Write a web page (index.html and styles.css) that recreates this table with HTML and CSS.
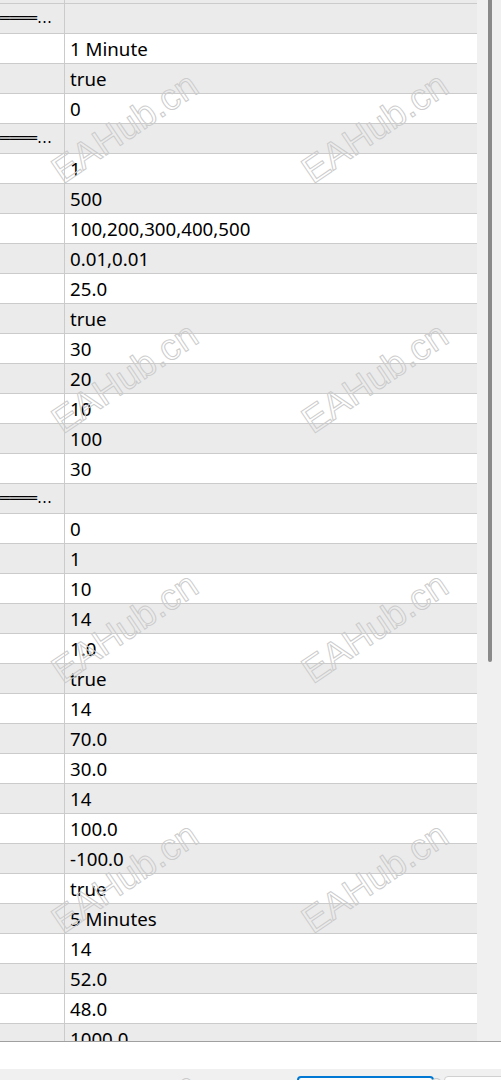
FILE: index.html
```html
<!DOCTYPE html>
<html lang="en">
<head>
    <meta charset="UTF-8">
    <meta name="viewport" content="width=device-width, initial-scale=1.0">
    <title>Inputs</title>
    <link rel="stylesheet" href="styles.css">
</head>
<body>
    <div class="window">
        <div class="panel">
            <div class="grid">
                <div class="rows">
                    <div class="row gray"><div class="name"></div><div class="value"></div></div>
                    <div class="row gray sep"><div class="name"><span>══════════════…</span></div><div class="value"></div></div>
                    <div class="row"><div class="name"></div><div class="value">1 Minute</div></div>
                    <div class="row gray"><div class="name"></div><div class="value">true</div></div>
                    <div class="row"><div class="name"></div><div class="value">0</div></div>
                    <div class="row gray sep"><div class="name"><span>══════════════…</span></div><div class="value"></div></div>
                    <div class="row"><div class="name"></div><div class="value">1</div></div>
                    <div class="row gray"><div class="name"></div><div class="value">500</div></div>
                    <div class="row"><div class="name"></div><div class="value">100,200,300,400,500</div></div>
                    <div class="row gray"><div class="name"></div><div class="value">0.01,0.01</div></div>
                    <div class="row"><div class="name"></div><div class="value">25.0</div></div>
                    <div class="row gray"><div class="name"></div><div class="value">true</div></div>
                    <div class="row"><div class="name"></div><div class="value">30</div></div>
                    <div class="row gray"><div class="name"></div><div class="value">20</div></div>
                    <div class="row"><div class="name"></div><div class="value">10</div></div>
                    <div class="row gray"><div class="name"></div><div class="value">100</div></div>
                    <div class="row"><div class="name"></div><div class="value">30</div></div>
                    <div class="row gray sep"><div class="name"><span>══════════════…</span></div><div class="value"></div></div>
                    <div class="row"><div class="name"></div><div class="value">0</div></div>
                    <div class="row gray"><div class="name"></div><div class="value">1</div></div>
                    <div class="row"><div class="name"></div><div class="value">10</div></div>
                    <div class="row gray"><div class="name"></div><div class="value">14</div></div>
                    <div class="row"><div class="name"></div><div class="value">1.0</div></div>
                    <div class="row gray"><div class="name"></div><div class="value">true</div></div>
                    <div class="row"><div class="name"></div><div class="value">14</div></div>
                    <div class="row gray"><div class="name"></div><div class="value">70.0</div></div>
                    <div class="row"><div class="name"></div><div class="value">30.0</div></div>
                    <div class="row gray"><div class="name"></div><div class="value">14</div></div>
                    <div class="row"><div class="name"></div><div class="value">100.0</div></div>
                    <div class="row gray"><div class="name"></div><div class="value">-100.0</div></div>
                    <div class="row"><div class="name"></div><div class="value">true</div></div>
                    <div class="row gray"><div class="name"></div><div class="value">5 Minutes</div></div>
                    <div class="row"><div class="name"></div><div class="value">14</div></div>
                    <div class="row gray"><div class="name"></div><div class="value">52.0</div></div>
                    <div class="row"><div class="name"></div><div class="value">48.0</div></div>
                    <div class="row gray"><div class="name"></div><div class="value">1000.0</div></div>
                    <div class="row"><div class="name"></div><div class="value">0</div></div>
                </div>
            </div>
            <div class="scrollbar"><div class="thumb"></div></div>
        </div>
        <div class="status"></div>
        <div class="buttons">
            <button class="btn primary"></button>
            <button class="btn"></button>
        </div>

        <!-- watermark layer over everything -->
        <div class="watermarks">
            <div class="mark">EAHub.cn</div><div class="mark">EAHub.cn</div>
            <div class="mark">EAHub.cn</div><div class="mark">EAHub.cn</div>
            <div class="mark">EAHub.cn</div><div class="mark">EAHub.cn</div>
            <div class="mark">EAHub.cn</div><div class="mark">EAHub.cn</div>
            <div class="mark">EAHub.cn</div><div class="mark">EAHub.cn</div>
        </div>
    </div>
</body>
</html>
```

FILE: styles.css
```css
*{
   margin: 0;
   padding: 0;
   box-sizing: border-box;
}
body{
   width: 501px;
   height: 1080px;
   overflow: hidden;
   background-color: #f0f0f0;
   font-family: "Noto Sans", "Open Sans", sans-serif;
}
.window{
   position: relative;
   width: 501px;
   height: 1080px;
   overflow: hidden;
}
.panel{
   display: flex;
   height: 1041px;
   background-color: #fff;
}
.grid{
   width: 477px;
   overflow: hidden;
}
/* list is scrolled, the first row is cut off */
.rows{
   margin-top: -26px;
}
.row{
   display: flex;
   height: 30px;
   border-bottom: 1px solid #cbcbcb;
   background-color: #fff;
}
.row.gray{
   background-color: #ebebeb;
}
.name{
   width: 65px;
   flex-shrink: 0;
   border-right: 1px solid #cbcbcb;
   overflow: hidden;
   display: flex;
   justify-content: flex-end;
   padding-right: 12px;
   white-space: nowrap;
}
.sep .name span{
   font-family: "DejaVu Sans", sans-serif;
   font-size: 15px;
   line-height: 29px;
   color: #000;
}
.value{
   flex: 1;
   padding-left: 5px;
   font-size: 18.7px;
   line-height: 29px;
   color: #000;
   white-space: nowrap;
   overflow: hidden;
}
.scrollbar{
   width: 24px;
   background-color: #f0f0f0;
   padding-left: 11px;
}
.thumb{
   width: 4px;
   height: 662px;
   background-color: #8a8a8a;
   border-radius: 0 0 2px 2px;
}
.status{
   height: 28px;
   background-color: #fff;
   border-top: 1px solid #a0a0a0;
}
.buttons{
   display: flex;
   gap: 10px;
   padding: 7px 0 0 297px;
   height: 11px;
   overflow: visible;
}
.btn{
   flex-shrink: 0;
   width: 137px;
   height: 32px;
   background-color: #fdfdfd;
   border: 1px solid #d0d0d0;
   border-radius: 4px;
}
.btn.primary{
   border: 2px solid #0078d4;
}
.watermarks{
   position: absolute;
   top: 3px;
   left: 0;
   display: grid;
   grid-template-columns: 250px 250px;
   grid-auto-rows: 250px;
   pointer-events: none;
}
.mark{
   display: flex;
   align-items: center;
   justify-content: center;
   font-family: "Liberation Sans", Arial, sans-serif;
   font-size: 37px;
   color: transparent;
   -webkit-text-stroke: 1px #cccccc;
   transform: rotate(-34deg);
}
```
